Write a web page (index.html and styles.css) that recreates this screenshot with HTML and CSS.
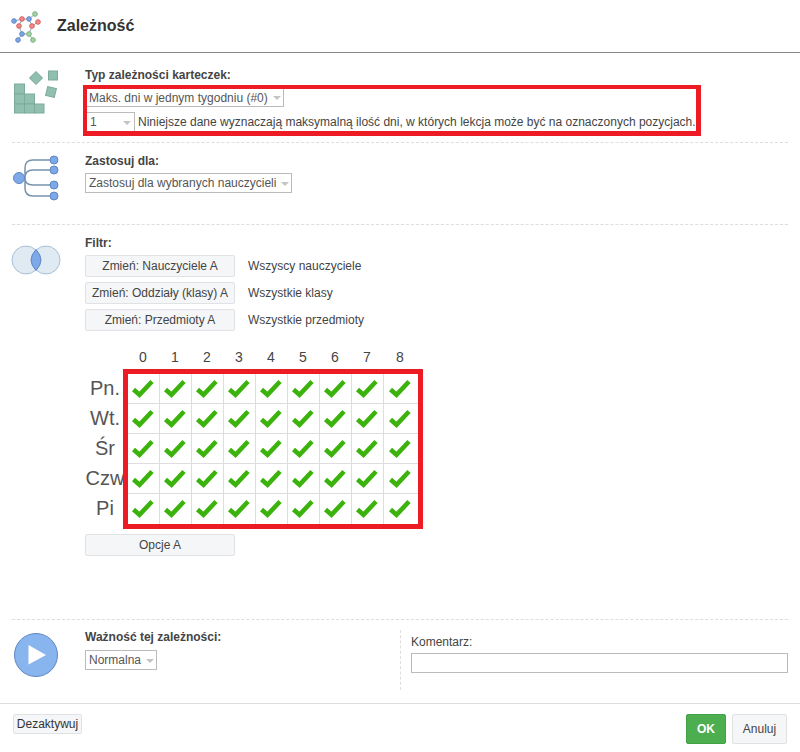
FILE: index.html
```html
<!DOCTYPE html>
<html lang="pl">
<head>
<meta charset="utf-8">
<title>Zależność</title>
<link rel="stylesheet" href="styles.css">
</head>
<body>
<svg class="defs" width="0" height="0">
  <symbol id="check" viewBox="0 0 24 20">
    <path d="M1.500 10.500 7.500 15.800 20 2.500" fill="none" stroke="#3cb20c" stroke-width="4.600"/>
  </symbol>
</svg>
<div class="dialog">
  <header class="head">
    <svg class="logo" width="32" height="32" viewBox="10 10 32 32" fill="none">
      <path d="M14 20 22 18 29 18 35 13M22 18 19 25 22 33 18 39M29 18 32 25 29 33 33 39M32 25 38 21M22 33 29 33" stroke="#93a7b8"/>
      <g fill="#7da7e6" stroke="#5f86c4"><circle cx="14" cy="20" r="2.300"/><circle cx="29" cy="18" r="2.300"/><circle cx="22" cy="33" r="2.300"/><circle cx="18" cy="39" r="2.300"/></g>
      <g fill="#f28a8a" stroke="#d95c5c"><circle cx="22" cy="18" r="2.300"/><circle cx="19" cy="25" r="2.300"/><circle cx="32" cy="25" r="2.300"/><circle cx="38" cy="21" r="2.300"/></g>
      <g fill="#a5d6a7" stroke="#76ad79"><circle cx="35" cy="13" r="2.300"/><circle cx="29" cy="33" r="2.300"/><circle cx="33" cy="39" r="2.300"/></g>
    </svg>
    <h1 class="title">Zależność</h1>
  </header>

  <section class="sec sec-type">
    <svg class="icon" width="48" height="48" viewBox="12 68 48 48">
      <g fill="#92c0b0" stroke="#7dab9b">
        <rect x="14.500" y="84" width="10" height="10"/><rect x="14.500" y="94" width="10" height="10"/><rect x="14.500" y="104" width="10" height="9"/>
        <rect x="24.500" y="94" width="10" height="10"/><rect x="24.500" y="104" width="10" height="9"/>
        <rect x="34.500" y="104" width="9.500" height="9"/>
        <rect x="31.500" y="73.500" width="9" height="9" transform="rotate(45 36 78)"/>
        <rect x="48.500" y="71" width="9" height="9"/>
        <rect x="46.500" y="87.500" width="9" height="9" transform="rotate(14 51 92)"/>
      </g>
    </svg>
    <div class="body">
      <div class="label">Typ zależności karteczek:</div>
      <div class="redbox">
        <span class="select sel-type">Maks. dni w jednym tygodniu (#0)<i class="arrow"></i></span>
        <div class="num-row">
          <span class="select sel-num">1<i class="arrow"></i></span>
          <span class="desc">Niniejsze dane wyznaczają maksymalną ilość dni, w których lekcja może być na oznaczonych pozycjach.</span>
        </div>
      </div>
    </div>
  </section>

  <section class="sec sec-apply">
    <svg class="icon" width="48" height="48" viewBox="12 154 48 48">
      <path d="M19 178H25M50 160H33Q25 160 25 168V188Q25 196 33 196H50M50 170H33Q25 170 25 178Q25 185 33 185H50" fill="none" stroke="#7893ad" stroke-width="1.500"/>
      <g fill="#7da9e8" stroke="#5f86c4"><circle cx="19" cy="178" r="5.500"/><circle cx="54" cy="160" r="4"/><circle cx="54" cy="170" r="4"/><circle cx="54" cy="185" r="4"/><circle cx="54" cy="196" r="4"/></g>
    </svg>
    <div class="body">
      <div class="label">Zastosuj dla:</div>
      <span class="select sel-apply">Zastosuj dla wybranych nauczycieli<i class="arrow"></i></span>
    </div>
  </section>

  <section class="sec sec-filter">
    <svg class="icon" width="50" height="32" viewBox="11 244 50 32">
      <g fill="#e0eaf2" stroke="#a9c1d8"><circle cx="26" cy="260" r="14"/><circle cx="46" cy="260" r="14"/></g>
      <path d="M36 249.500Q41 255 41 260T36 270.500Q31 265 31 260T36 249.500Z" fill="#7da9e8" stroke="#5f86c4"/>
    </svg>
    <div class="body">
      <div class="label">Filtr:</div>
      <div class="filter-row"><button class="btn btn-wide">Zmień: Nauczyciele A</button><span class="filter-val">Wszyscy nauczyciele</span></div>
      <div class="filter-row"><button class="btn btn-wide">Zmień: Oddziały (klasy) A</button><span class="filter-val">Wszystkie klasy</span></div>
      <div class="filter-row"><button class="btn btn-wide">Zmień: Przedmioty A</button><span class="filter-val">Wszystkie przedmioty</span></div>

      <div class="matrix">
        <div class="days">
          <div class="day">Pn.</div><div class="day">Wt.</div><div class="day">Śr</div><div class="day">Czw</div><div class="day">Pi</div>
        </div>
        <div class="table-col">
          <div class="hours"><span>0</span><span>1</span><span>2</span><span>3</span><span>4</span><span>5</span><span>6</span><span>7</span><span>8</span></div>
          <div class="grid">
            <div class="cell"><svg class="chk"><use href="#check"/></svg></div><div class="cell"><svg class="chk"><use href="#check"/></svg></div><div class="cell"><svg class="chk"><use href="#check"/></svg></div><div class="cell"><svg class="chk"><use href="#check"/></svg></div><div class="cell"><svg class="chk"><use href="#check"/></svg></div><div class="cell"><svg class="chk"><use href="#check"/></svg></div><div class="cell"><svg class="chk"><use href="#check"/></svg></div><div class="cell"><svg class="chk"><use href="#check"/></svg></div><div class="cell"><svg class="chk"><use href="#check"/></svg></div>
            <div class="cell"><svg class="chk"><use href="#check"/></svg></div><div class="cell"><svg class="chk"><use href="#check"/></svg></div><div class="cell"><svg class="chk"><use href="#check"/></svg></div><div class="cell"><svg class="chk"><use href="#check"/></svg></div><div class="cell"><svg class="chk"><use href="#check"/></svg></div><div class="cell"><svg class="chk"><use href="#check"/></svg></div><div class="cell"><svg class="chk"><use href="#check"/></svg></div><div class="cell"><svg class="chk"><use href="#check"/></svg></div><div class="cell"><svg class="chk"><use href="#check"/></svg></div>
            <div class="cell"><svg class="chk"><use href="#check"/></svg></div><div class="cell"><svg class="chk"><use href="#check"/></svg></div><div class="cell"><svg class="chk"><use href="#check"/></svg></div><div class="cell"><svg class="chk"><use href="#check"/></svg></div><div class="cell"><svg class="chk"><use href="#check"/></svg></div><div class="cell"><svg class="chk"><use href="#check"/></svg></div><div class="cell"><svg class="chk"><use href="#check"/></svg></div><div class="cell"><svg class="chk"><use href="#check"/></svg></div><div class="cell"><svg class="chk"><use href="#check"/></svg></div>
            <div class="cell"><svg class="chk"><use href="#check"/></svg></div><div class="cell"><svg class="chk"><use href="#check"/></svg></div><div class="cell"><svg class="chk"><use href="#check"/></svg></div><div class="cell"><svg class="chk"><use href="#check"/></svg></div><div class="cell"><svg class="chk"><use href="#check"/></svg></div><div class="cell"><svg class="chk"><use href="#check"/></svg></div><div class="cell"><svg class="chk"><use href="#check"/></svg></div><div class="cell"><svg class="chk"><use href="#check"/></svg></div><div class="cell"><svg class="chk"><use href="#check"/></svg></div>
            <div class="cell"><svg class="chk"><use href="#check"/></svg></div><div class="cell"><svg class="chk"><use href="#check"/></svg></div><div class="cell"><svg class="chk"><use href="#check"/></svg></div><div class="cell"><svg class="chk"><use href="#check"/></svg></div><div class="cell"><svg class="chk"><use href="#check"/></svg></div><div class="cell"><svg class="chk"><use href="#check"/></svg></div><div class="cell"><svg class="chk"><use href="#check"/></svg></div><div class="cell"><svg class="chk"><use href="#check"/></svg></div><div class="cell"><svg class="chk"><use href="#check"/></svg></div>
          </div>
        </div>
      </div>
      <button class="btn btn-wide btn-options">Opcje A</button>
    </div>
  </section>

  <section class="sec-bottom">
    <svg class="icon" width="48" height="48" viewBox="12 631 48 48">
      <circle cx="36" cy="655" r="21.500" fill="#88b5ee" stroke="#5f86c4"/>
      <path d="M28.500 645 46 655 28.500 664.500Z" fill="#fff"/>
    </svg>
    <div class="importance">
      <div class="label">Ważność tej zależności:</div>
      <span class="select sel-imp">Normalna<i class="arrow"></i></span>
    </div>
    <div class="comment">
      <label class="comment-label" for="komentarz">Komentarz:</label>
      <input class="comment-input" id="komentarz" type="text">
    </div>
  </section>

  <footer class="foot">
    <button class="btn btn-off">Dezaktywuj</button>
    <div class="foot-right">
      <button class="btn btn-ok">OK</button>
      <button class="btn btn-cancel">Anuluj</button>
    </div>
  </footer>
</div>
</body>
</html>
```
FILE: styles.css
```css
html, body { margin: 0; padding: 0; background: #fff; }
body { font: 12px/14px "Liberation Sans", Arial, sans-serif; color: #444; }
.defs { display: block; height: 0; }
.dialog { width: 800px; height: 752px; overflow: hidden; }

.head { height: 52px; border-bottom: 1px solid #888; display: flex; align-items: center; padding-left: 10px; box-sizing: content-box; }
.logo { margin-top: 1px; }
.title { margin: 0 0 1px 15px; font-size: 16px; font-weight: bold; color: #333; line-height: 20px; }

.sec { margin: 0 12px; display: flex; border-bottom: 1px dashed #ddd; box-sizing: border-box; }
.sec-type { height: 90px; }
.sec-apply { height: 82px; }
.sec-filter { height: 395px; }
.icon { flex: none; display: block; }
.body { margin-left: 25px; flex: 1; min-width: 0; }
.sec-type .icon { margin-top: 15px; }
.sec-apply .icon { margin-top: 11px; }
.sec-filter .icon { margin: 19px 24px 0 -1px; }
.sec-filter .body { margin-left: 0; }

.label { font-weight: bold; line-height: 14px; }
.sec-type .label { margin-top: 15px; }
.sec-apply .label { margin-top: 11px; }
.sec-filter .label { margin-top: 11px; }

.select { display: inline-flex; align-items: center; justify-content: space-between; box-sizing: border-box; height: 20px; border: 1px solid #bbb; background: #fff; color: #555; padding: 0 2px 0 3px; white-space: nowrap; }
.arrow { display: block; width: 0; height: 0; border: 4px solid transparent; border-top: 4px solid #c4c4c4; border-bottom: 0; margin: 1px 1px 0 5px; }

.redbox { box-sizing: border-box; width: 618px; height: 51px; margin: 3px 0 0 -2px; border: 4px solid #ed1c24; border-right-width: 5px; border-bottom-width: 5px; overflow: hidden; }
.sel-type { display: flex; width: 197px; height: 18px; border-top: 0; border-left: 0; padding-left: 2px; }
.num-row { display: flex; align-items: center; margin-top: 5px; }
.sel-num { width: 48px; height: 19px; border-left: 0; border-bottom: 0; padding-left: 3px; flex: none; }
.desc { margin-left: 3px; white-space: nowrap; }

.sel-apply { width: 207px; margin-top: 5px; }

.filter-row { display: flex; align-items: center; margin-top: 5px; height: 22px; }
.label + .filter-row { margin-top: 5px; }
.filter-val { margin-left: 13px; }
.btn { font: inherit; color: #444; background: #f5f6f8; border: 1px solid #e0e2e6; border-radius: 2px; padding: 0; cursor: default; }
.btn-wide { width: 150px; height: 22px; display: block; }

.matrix { display: flex; margin-top: 18px; }
.days { width: 40px; margin: 24px -2px 0 0; flex: none; }
.day { height: 30px; font-size: 20px; line-height: 30px; text-align: center; color: #555; white-space: nowrap; }
.table-col { flex: none; }
.hours { display: flex; height: 20px; margin-left: 4px; font-size: 14px; line-height: 16px; color: #444; }
.hours span { width: 32px; text-align: center; }
.hours span:last-child { width: 34px; }
.grid { display: grid; grid-template-columns: repeat(8, 32px) 34px; grid-auto-rows: 30px; width: 290px; border: 5px solid #ed1c24; }
.cell { border-right: 1px solid #ddd; border-bottom: 1px solid #ddd; display: flex; align-items: center; justify-content: center; }
.cell:nth-last-child(-n+9) { border-bottom: 0; }
.cell:nth-child(9n) { border-right: 0; }
.chk { width: 24px; height: 20px; display: block; }
.btn-options { margin-top: 5px; }

.sec-bottom { height: 83px; display: flex; margin: 0 12px; position: relative; box-sizing: border-box; }
.sec-bottom .icon { margin-top: 11px; }
.importance { width: 315px; margin-left: 25px; flex: none; }
.importance .label { margin-top: 10px; }
.sel-imp { width: 72px; margin-top: 6px; }
.comment { flex: 1; margin-top: 10px; height: 60px; border-left: 1px dashed #ddd; padding: 5px 0 0 10px; box-sizing: border-box; }
.comment-label { display: block; line-height: 14px; }
.comment-input { display: block; box-sizing: border-box; width: 377px; height: 20px; margin: 4px 0 0; padding: 0; border: 1px solid #bbb; background: #fff; }

.foot { border-top: 1px solid #ddd; height: 48px; display: flex; justify-content: space-between; align-items: flex-start; padding: 10px 13px 0; box-sizing: border-box; }
.btn-off { width: 69px; height: 20px; margin-top: 0; color: #333; }
.foot-right { display: flex; gap: 6px; }
.btn-ok { width: 40px; height: 30px; background: #4cae4f; border-color: #43a047; color: #fff; font-weight: bold; }
.btn-cancel { width: 55px; height: 30px; }
```
